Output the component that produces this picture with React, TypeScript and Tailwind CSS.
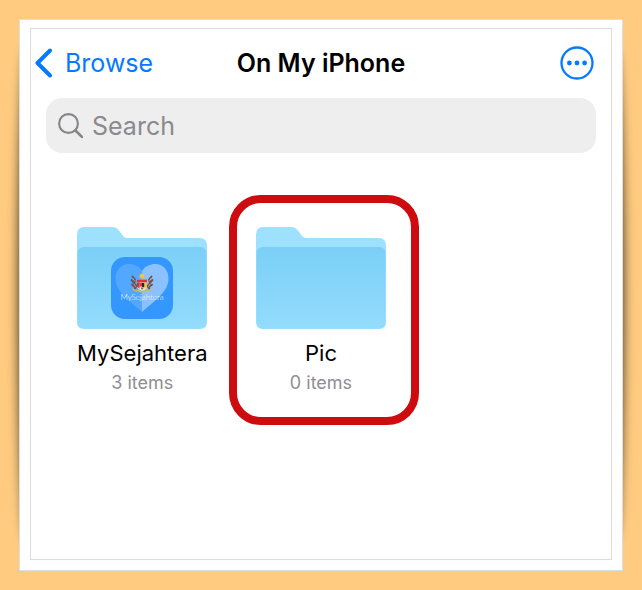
import React, {useId, useState} from "react";

type Folder = {
    name: string;
    count: number;
    hasAppIcon?: boolean;
    highlighted?: boolean;
};

const folders: Folder[] = [
    {name: "MySejahtera", count: 3, hasAppIcon: true},
    {name: "Pic", count: 0, highlighted: true},
];

function ChevronIcon() {
    return (
        <svg width="18" height="30" viewBox="0 0 18 30" fill="none" aria-hidden="true">
            <path d="M15 2.500 2.500 15 15 27.500" stroke="currentColor" strokeWidth="4" strokeLinecap="round" strokeLinejoin="round"/>
        </svg>
    );
}

function MoreIcon() {
    return (
        <svg width="34" height="34" viewBox="0 0 34 34" fill="none" aria-hidden="true">
            <circle cx="17" cy="17" r="15.5" stroke="currentColor" strokeWidth="2.3"/>
            <circle cx="9.4" cy="17" r="2.4" fill="currentColor"/>
            <circle cx="17" cy="17" r="2.4" fill="currentColor"/>
            <circle cx="24.6" cy="17" r="2.4" fill="currentColor"/>
        </svg>
    );
}

function SearchIcon() {
    return (
        <svg width="26" height="26" viewBox="0 0 26 26" fill="none" aria-hidden="true" className="shrink-0">
            <circle cx="10.5" cy="10.5" r="9.4" stroke="currentColor" strokeWidth="2.1"/>
            <path d="m17.500 17.500 6.400 6.400" stroke="currentColor" strokeWidth="2.7" strokeLinecap="round"/>
        </svg>
    );
}

function FolderIcon() {
    const gradientId = useId();
    return (
        <svg width="130" height="102" viewBox="0 0 130 102" aria-hidden="true">
            <defs>
                <linearGradient id={gradientId} x1="0" y1="0" x2="0" y2="1">
                    <stop offset="0" stopColor="#7bcff7"/>
                    <stop offset="1" stopColor="#93dcfd"/>
                </linearGradient>
            </defs>
            <path
                d="M0 7.500Q0 0 7.500 0H34.500C38.500 0 40.500 1.500 42.500 4.200L45.500 8.200C47.300 10.500 48.500 11 51.500 11H122.500Q130 11 130 18.500V95Q130 102 123 102H7Q0 102 0 95Z"
                fill="#9de1ff"
            />
            <path
                d="M.5 26.500Q.5 20 7 20H123Q129.500 20 129.500 26.500V95Q129.500 101.500 123 101.500H7Q.5 101.500 .5 95Z"
                fill={`url(#${gradientId})`}
            />
        </svg>
    );
}

function SejahteraIcon() {
    return (
        <svg width="62" height="62" viewBox="0 0 62 62" aria-hidden="true">
            <rect width="62" height="62" rx="14" fill="#3397fe"/>
            <path d="M31 55V14C28 9 23 7 17.500 7 9.500 7 4.500 13.500 4.500 21.500 4.500 34 16 42 31 55Z" fill="#52a7ff"/>
            <path d="M31 55V14C34 9 39 7 44.500 7 52.500 7 57.500 13.500 57.500 21.500 57.500 34 46 42 31 55Z" fill="#8bc1ff"/>
            {/* tigers */}
            <g fill="none" strokeLinecap="round" strokeLinejoin="round">
                <path d="M21.500 19.500 24 22.500 23 26 25.500 29 23.500 32M20.500 23 23 25.500M21 27.500 24 30" stroke="#6b5152" strokeWidth="1.900"/>
                <path d="M40.500 19.500 38 22.500 39 26 36.500 29 38.500 32M41.500 23 39 25.500M41 27.500 38 30" stroke="#6b5152" strokeWidth="1.900"/>
                <path d="m22 21.500 1.500 2M23.500 27.500l1 2M40 21.500l-1.500 2M38.500 27.500l-1 2" stroke="#d49a62" strokeWidth="1"/>
            </g>
            {/* star and crescent */}
            <path d="m31 16 .9 1.600 1.800-.2-.8 1.600.8 1.600-1.800-.1-.9 1.500-.9-1.500-1.800.1.800-1.600-.8-1.600 1.800.2Z" fill="#e8cb4c"/>
            <path d="M28 19.500q3 4 6 0" fill="none" stroke="#d7b955" strokeWidth="1"/>
            {/* shield */}
            <path d="M26 22.500H36V28.500Q36 32 31 34 26 32 26 28.500Z" fill="#f4e9d8"/>
            <path d="M26 22.500H36V25.500H26Z" fill="#dc3434"/>
            <path d="M26 25.500H28.500V31.700L26 29.500Z" fill="#ac4143"/>
            <path d="M28.500 26H31V29.500H28.500Z" fill="#d93a36"/>
            <path d="M31 26H33.500V30H31Z" fill="#27282b"/>
            <path d="M33.500 25.500H36V29.500L33.500 32Z" fill="#e6c636"/>
            <path d="M29.500 30.500H33L31 33Z" fill="#477c58"/>
            {/* motto ribbon */}
            <path d="M21.500 31.500Q24 34.500 27 33.500 31 36 35 33.500 38 34.500 40.500 31.500" fill="none" stroke="#c7b86a" strokeWidth="1.800"/>
            <text x="31" y="43" textAnchor="middle" fontFamily="Lato, sans-serif" fontSize="8" fontWeight="300" fill="#ffffff">
                MySejahtera
            </text>
        </svg>
    );
}

function FolderItem({folder}: {folder: Folder}) {
    return (
        <li className="relative flex justify-center">
            <button type="button" className="flex flex-col items-center">
                <span className="relative">
                    <FolderIcon/>
                    {folder.hasAppIcon && (
                        <span className="absolute inset-x-0 top-[30px] flex justify-center">
                            <SejahteraIcon/>
                        </span>
                    )}
                </span>
                <span className="mt-2 text-[22px] leading-8 text-black">{folder.name}</span>
                <span className="text-lg leading-7 text-[#8e8e93]">{folder.count} items</span>
            </button>
            {folder.highlighted && (
                <span className="pointer-events-none absolute -top-8 -right-[9px] -bottom-7 -left-[3px] rounded-[32px] border-8 border-[#cc0c0f]"/>
            )}
        </li>
    );
}

export default function App() {
    const [query, setQuery] = useState("");

    return (
        <div className="flex min-h-screen flex-col bg-[#fecb80] p-[19px] font-['Inter','Liberation_Sans',sans-serif]">
            <div className="relative isolate flex flex-1 flex-col">
                {/* curled edge shadow */}
                <div className="absolute inset-x-0 top-8 bottom-8 -z-10 rounded-[10px/50%] shadow-[0_0_12px_rgba(0,0,0,0.8)]"/>
                <div className="flex flex-1 flex-col border border-[#dedede] bg-white px-2.5 pt-2 pb-2.5">
                    <main className="flex-1 border border-[#dcdcdc] pb-10">
                        <header className="grid grid-cols-[1fr_auto_1fr] items-center px-1 pt-4">
                            <a href="#browse" className="flex items-center gap-3 text-[25px] leading-9 text-[#067aff]">
                                <ChevronIcon/>
                                Browse
                            </a>
                            <h1 className="text-[25px] leading-9 font-semibold text-black">On My iPhone</h1>
                            <button type="button" aria-label="More" className="mr-[13px] justify-self-end text-[#067aff]">
                                <MoreIcon/>
                            </button>
                        </header>

                        <label className="mx-[15px] mt-[17px] flex h-[55px] items-center gap-2 rounded-2xl bg-[#eeeeee] px-3 text-[#85858a]">
                            <SearchIcon/>
                            <input
                                type="search"
                                aria-label="Search"
                                placeholder="Search"
                                value={query}
                                onChange={(e) => setQuery(e.target.value)}
                                className="w-full min-w-0 bg-transparent text-[25px] leading-8 text-black outline-none placeholder:text-[#8a8a8e]"
                            />
                        </label>

                        <ul className="mt-[74px] grid grid-cols-3 px-[22px]">
                            {folders.map((folder) => (
                                <FolderItem key={folder.name} folder={folder}/>
                            ))}
                        </ul>
                    </main>
                </div>
            </div>
        </div>
    );
}
